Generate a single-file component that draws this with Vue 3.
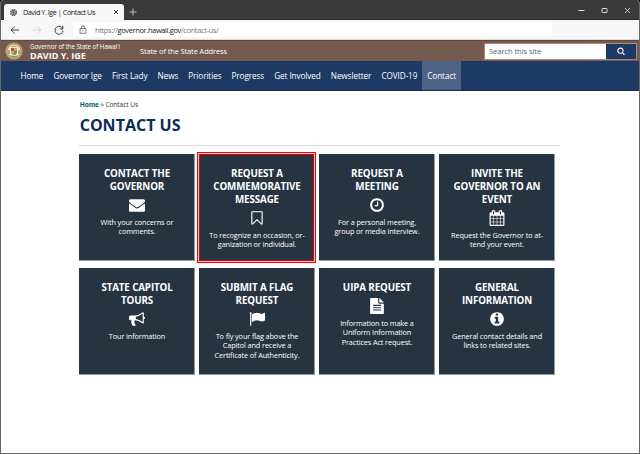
<script setup>
const nav = ['Home', 'Governor Ige', 'First Lady', 'News', 'Priorities', 'Progress', 'Get Involved', 'Newsletter', 'COVID-19', 'Contact']
const icons = {
  envelope: 'M1792 710v794q0 66-47 113t-113 47h-1472q-66 0-113-47t-47-113v-794q44 49 101 87 362 246 497 345 57 42 92.5 65.5t94.5 48 110 24.5h2q51 0 110-24.5t94.5-48 92.5-65.5q170-123 498-345 57-39 100-87zm0-294q0 79-49 151t-122 123q-376 261-468 325-10 7-42.5 31t-54 38.5-52 32.5-57.5 27-50 9h-2q-23 0-50-9t-57.5-27-52-32.5-54-38.5-42.5-31q-91-64-262-182.5t-205-142.5q-62-42-117-115.5t-55-136.5q0-78 41.5-130t118.5-52h1472q65 0 112.5 47t47.5 113z',
  bookmark: 'M1408 256h-1024v1242l423-406 89-85 89 85 423 406v-1242zm12-128q23 0 44 9 33 13 52.5 41t19.5 62v1289q0 34-19.5 62t-52.5 41q-19 8-44 8-48 0-83-32l-441-424-441 424q-36 33-83 33-23 0-44-9-33-13-52.5-41t-19.5-62v-1289q0-34 19.5-62t52.5-41q21-9 44-9h1048z',
  clock: 'M1024 544v448q0 14-9 23t-23 9h-320q-14 0-23-9t-9-23v-64q0-14 9-23t23-9h224v-352q0-14 9-23t23-9h64q14 0 23 9t9 23zm416 352q0-148-73-273t-198-198-273-73-273 73-198 198-73 273 73 273 198 198 273 73 273-73 198-198 73-273zm224 0q0 209-103 385.5t-279.5 279.5-385.5 103-385.5-103-279.5-279.5-103-385.5 103-385.5 279.5-279.5 385.5-103 385.5 103 279.5 279.5 103 385.5z',
  calendar: 'M192 1664h288v-288h-288v288zm352 0h320v-288h-320v288zm-352-352h288v-320h-288v320zm352 0h320v-320h-320v320zm-352-384h288v-288h-288v288zm736 736h320v-288h-320v288zm-384-736h320v-288h-320v288zm768 736h288v-288h-288v288zm-384-352h320v-320h-320v320zm-352-864v-288q0-13-9.5-22.5t-22.5-9.5h-64q-13 0-22.5 9.5t-9.5 22.5v288q0 13 9.5 22.5t22.5 9.5h64q13 0 22.5-9.5t9.5-22.5zm736 864h288v-320h-288v320zm-384-384h320v-288h-320v288zm384 0h288v-288h-288v288zm32-480v-288q0-13-9.5-22.5t-22.5-9.5h-64q-13 0-22.5 9.5t-9.5 22.5v288q0 13 9.5 22.5t22.5 9.5h64q13 0 22.5-9.5t9.5-22.5zm384-64v1280q0 52-38 90t-90 38h-1408q-52 0-90-38t-38-90v-1280q0-52 38-90t90-38h128v-96q0-66 47-113t113-47h64q66 0 113 47t47 113v96h384v-96q0-66 47-113t113-47h64q66 0 113 47t47 113v96h128q52 0 90 38t38 90z',
  bullhorn: 'M1664 640q53 0 90.5 37.5t37.5 90.5-37.5 90.5-90.5 37.5v384q0 52-38 90t-90 38q-417-347-812-380-58 19-91 66t-31 100.5 40 92.5q-20 33-23 65.5t6 58 33.5 55 48 50 61.5 50.5q-29 58-111.5 83t-168.5 11.5-132-55.5q-7-23-29.5-87.5t-32-94.5-23-89-15-101 3.5-98.5 22-110.5h-122q-66 0-113-47t-47-113v-192q0-66 47-113t113-47h480q435 0 896-384 52 0 90 38t38 90v384zm-128 604v-954q-394 302-768 343v270q377 42 768 341z',
  flag: 'M192 128a128 128 0 0 1 64 238v1266q0 32-32 32h-64q-32 0-32-32V366A128 128 0 0 1 192 128zM1792 256v763q0 25-20 38-210 120-360 120-90 0-190-50-190-92-320-92-200 0-470 160-108 24-108-32V420q0-34 28-54 270-174 550-174 160 0 360 96 70 36 140 36 130 0 326-120 64-20 64 52z',
  file: 'M1024 512V0H220q-92 0-92 96v1600q0 96 92 96h1352q92 0 92-96V640h-512q-128 0-128-128zm128-508v476q0 32 32 32h476q-10-48-40-78l-390-390q-30-30-78-40zM480 768h832q32 0 32 32v64q0 32-32 32H480q-32 0-32-32v-64q0-32 32-32zm0 256h832q32 0 32 32v64q0 32-32 32H480q-32 0-32-32v-64q0-32 32-32zm0 256h832q32 0 32 32v64q0 32-32 32H480q-32 0-32-32v-64q0-32 32-32z',
  info: 'M1152 1376v-160q0-14-9-23t-23-9h-96v-512q0-14-9-23t-23-9h-320q-14 0-23 9t-9 23v160q0 14 9 23t23 9h96v320h-96q-14 0-23 9t-9 23v160q0 14 9 23t23 9h448q14 0 23-9t9-23zm-128-896v-160q0-14-9-23t-23-9h-192q-14 0-23 9t-9 23v160q0 14 9 23t23 9h192q14 0 23-9t9-23zm640 416q0 209-103 385.5t-279.5 279.5-385.5 103-385.5-103-279.5-279.5-103-385.5 103-385.5 279.5-279.5 385.5-103 385.5 103 279.5 279.5 103 385.5z',
  search: 'M1216 832q0-185-131.5-316.5t-316.5-131.5-316.5 131.5-131.5 316.5 131.5 316.5 316.5 131.5 316.5-131.5 131.5-316.5zm512 832q0 52-38 90t-90 38q-54 0-90-38l-343-342q-179 124-399 124-143 0-273.5-55.5t-225-150-150-225-55.5-273.5 55.5-273.5 150-225 225-150 273.5-55.5 273.5 55.5 225 150 150 225 55.5 273.5q0 220-124 399l343 343q37 37 37 90z'
}
const cards = [
  { title: ['CONTACT THE', 'GOVERNOR'], icon: 'envelope', text: ['With your concerns or', 'comments.'] },
  { title: ['REQUEST A', 'COMMEMORATIVE', 'MESSAGE'], icon: 'bookmark', text: ['To recognize an occasion, or-', 'ganization or individual.'], marked: true },
  { title: ['REQUEST A', 'MEETING'], icon: 'clock', text: ['For a personal meeting,', 'group or media interview.'] },
  { title: ['INVITE THE', 'GOVERNOR TO AN', 'EVENT'], icon: 'calendar', text: ['Request the Governor to at-', 'tend your event.'] },
  { title: ['STATE CAPITOL', 'TOURS'], icon: 'bullhorn', text: ['Tour information'] },
  { title: ['SUBMIT A FLAG', 'REQUEST'], icon: 'flag', text: ['To fly your flag above the', 'Capitol and receive a', 'Certificate of Authenticity.'] },
  { title: ['UIPA REQUEST'], icon: 'file', text: ['Information to make a', 'Uniform Information', 'Practices Act request.'] },
  { title: ['GENERAL', 'INFORMATION'], icon: 'info', text: ['General contact details and', 'links to related sites.'] }
]
</script>

<template>
  <div class="window">
    <header class="titlebar">
      <div class="tab">
        <svg class="favicon" viewBox="0 0 10 10"><circle cx="5" cy="5" r="3.2" fill="#aaa" stroke="#555" stroke-width="1.6" stroke-dasharray="1.7 .8" /><path d="M3 4l4 2M5 2.5v5" stroke="#555" stroke-width=".9" /></svg>
        <span class="tab-title">David Y. Ige | Contact Us</span>
        <svg class="tab-close" viewBox="0 0 6 6"><path d="M1 1l4 4M5 1L1 5" stroke="#222" stroke-width=".9" /></svg>
      </div>
      <svg class="new-tab" viewBox="0 0 8 8"><path d="M4 .5v7M.5 4h7" stroke="#c8c8c8" stroke-width=".9" /></svg>
      <div class="controls">
        <svg viewBox="0 0 7 7"><path d="M.5 3.5h6" stroke="#ddd" /></svg>
        <svg viewBox="0 0 7 7"><rect x="1" y="1.5" width="5" height="4" rx=".6" fill="none" stroke="#ddd" /></svg>
        <svg viewBox="0 0 7 7"><path d="M1 1l5 5M6 1L1 6" stroke="#ddd" stroke-width=".9" /></svg>
      </div>
    </header>

    <div class="toolbar">
      <svg class="tool" viewBox="0 0 10 10"><path d="M9.3 5H1.2M4.7 1.5L1.2 5l3.5 3.5" fill="none" stroke="#333" stroke-width=".9" /></svg>
      <svg class="tool" viewBox="0 0 10 10"><path d="M.7 5h8.1M5.3 1.5L8.8 5 5.3 8.5" fill="none" stroke="#ccc" stroke-width=".8" /></svg>
      <svg class="tool" viewBox="0 0 10 10"><path d="M8.8 4A4 4 0 1 0 9 5.6M8.8 .8V4H5.8" fill="none" stroke="#333" stroke-width=".9" /></svg>
      <div class="address">
        <svg class="lock" viewBox="0 0 8 9"><path d="M1 3.5h6v4.8H1zM2.5 3.5V2.2a1.5 1.5 0 0 1 3 0v1.3" fill="none" stroke="#666" stroke-width=".8" /><circle cx="4" cy="5.8" r=".6" fill="#666" /></svg>
        <span class="url">https://<b>governor.hawaii.gov</b>/contact-us/</span>
      </div>
    </div>

    <div class="brand">
      <svg class="seal" viewBox="0 0 18 18">
        <circle cx="9" cy="9" r="8.6" fill="#c9ad78" />
        <circle cx="9" cy="9" r="7.2" fill="none" stroke="#8d7346" stroke-width=".8" stroke-dasharray=".8 .6" />
        <circle cx="9" cy="9" r="6.2" fill="#eee8d5" />
        <path d="M6 6h6v4q0 2.6-3 3.6-3-1-3-3.6z" fill="#c8a94a" />
        <path d="M6 6h3v3H6z" fill="#a85c4d" /><path d="M9 9h3q0 3-3 4z" fill="#6b7b9b" />
        <path d="M4 8v4M14 8v4" stroke="#7d9368" stroke-width="1.4" /><path d="M6.5 5q2.5-2 5 0" fill="none" stroke="#bd923f" />
        <path d="M5 13.8q4 1.8 8 0" fill="none" stroke="#70916c" />
      </svg>
      <div class="brand-name">
        <span class="office">Governor of the State of Hawaiʻi</span>
        <span class="person">DAVID Y. IGE</span>
      </div>
      <span class="sosa">State of the State Address</span>
      <div class="search">
        <span class="search-input">Search this site</span>
        <span class="search-button"><svg viewBox="0 0 1792 1792"><path :d="icons.search" fill="#fff" /></svg></span>
      </div>
    </div>

    <nav class="nav">
      <span v-for="item in nav" :key="item" class="nav-item" :class="{ active: item === 'Contact' }">{{ item }}</span>
    </nav>

    <main class="content">
      <div class="crumbs"><b>Home</b> » Contact Us</div>
      <h1>CONTACT US</h1>
      <div class="grid">
        <section v-for="card in cards" :key="card.icon" class="card" :class="{ marked: card.marked }">
          <h2><span v-for="line in card.title" :key="line">{{ line }}</span></h2>
          <svg class="icon" viewBox="0 0 1792 1792"><path :d="icons[card.icon]" fill="#fff" fill-rule="evenodd" /></svg>
          <p><span v-for="line in card.text" :key="line">{{ line }}</span></p>
        </section>
      </div>
    </main>
  </div>
</template>

<style>
html { background: #000; }
</style>

<style scoped>
* { box-sizing: border-box; }
svg { display: block; flex: none; }
.window { width: 640px; height: 454px; overflow: hidden; background: #fff; border: solid #686868; border-width: 0 1px 1px; border-radius: 4px 4px 0 0; font-family: "Open Sans", sans-serif; white-space: nowrap; }
.titlebar { display: flex; height: 20px; margin: 0 -1px; padding-left: 4px; background: #3a3a3a; border-bottom: 1px solid #2b2b2b; }
.tab { display: flex; align-items: center; width: 120px; height: 16px; margin-top: 4px; padding-left: 5px; background: #f7f7f7; border-radius: 3px 3px 0 0; }
.favicon { width: 9px; height: 9px; }
.tab-title { width: 86px; margin-left: 5px; font-size: 7.2px; letter-spacing: -.43px; color: #222; line-height: 16px; }
.tab-close { width: 6px; height: 6px; margin-left: 4px; }
.new-tab { width: 8px; height: 8px; margin: 8px 0 0 5px; }
.controls { display: flex; gap: 16px; margin: 7px 9px 0 auto; }
.controls svg { width: 7px; height: 7px; }
.toolbar { display: flex; align-items: center; height: 20px; padding-left: 9px; background: #f7f7f7; border-bottom: 1px solid #ddd; }
.tool { width: 10px; height: 10px; margin-right: 12px; }
.address { display: flex; align-items: center; width: 479px; height: 15px; padding-left: 6px; margin-left: -3px; background: #fff; border-radius: 2px; }
.lock { width: 8px; height: 9px; }
.url { margin-left: 8px; font-size: 7.5px; letter-spacing: -.38px; color: #777; }
.url b { font-weight: 400; color: #222; }
.brand { display: flex; align-items: center; height: 21px; padding: 0 2px 0 4px; background: #755a4e; color: #fff; border-top: 1px solid #69483c; }
.seal { width: 18px; height: 18px; }
.brand-name { display: flex; flex-direction: column; width: 110px; margin-left: 7px; }
.office { font-size: 6.2px; letter-spacing: -.06px; line-height: 9px; }
.person { font-size: 9px; line-height: 9px; font-weight: 700; }
.sosa { font-size: 7.4px; letter-spacing: -.08px; }
.search { display: flex; width: 153px; height: 17px; margin-left: auto; border: 1px solid #a18c7d; }
.search-input { flex: 1; padding-left: 4px; background: #fff; color: #666; font-size: 7.7px; letter-spacing: -.12px; line-height: 15px; }
.search-button { display: flex; align-items: center; justify-content: center; width: 30px; background: #1e3964; }
.search-button svg { width: 8px; height: 8px; }
.nav { display: flex; height: 30px; padding-left: 14.5px; background: #1e3964; border-bottom: 1px solid #122b57; }
.nav-item { padding: 0 5.05px; color: #fff; font-size: 8.2px; letter-spacing: -.1px; line-height: 29px; }
.nav-item.active { background: #4d6285; }
.content { width: 480px; margin-left: 78px; padding-top: 9px; }
.crumbs { height: 10px; padding-left: .7px; font-size: 6.6px; letter-spacing: -.07px; line-height: 10px; color: #333; }
.crumbs b { color: #076069; }
h1 { height: 36px; margin: 0; padding: 4px 0 0 .7px; border-bottom: 1px solid #ddd; color: #0b2b5c; font-size: 16px; line-height: 22px; font-weight: 700; width: 481px; }
.grid { display: grid; grid-template-columns: repeat(4, 116px); grid-auto-rows: 107px; gap: 7px 4px; margin-top: 8px; }
.card { display: flex; flex-direction: column; align-items: center; padding: 13px 0 0 1px; background: #263442; border: 1px solid #929ba3; border-width: 0 1px 1px 0; color: #fff; }
.card.marked { margin-right: 1px; outline: 1px solid #f00; outline-offset: 1px; box-shadow: 0 0 0 1px #ffc0c0, inset 0 0 0 1px #e00010; border: 0; }
h2, p { display: flex; flex-direction: column; align-items: center; margin: 0; }
h2 { font-size: 9.8px; letter-spacing: -.13px; line-height: 13px; font-weight: 700; }
.icon { width: 16px; height: 16px; margin: 4px 0 5px; }
p { font-size: 7.3px; letter-spacing: -.11px; line-height: 9.4px; }
</style>
